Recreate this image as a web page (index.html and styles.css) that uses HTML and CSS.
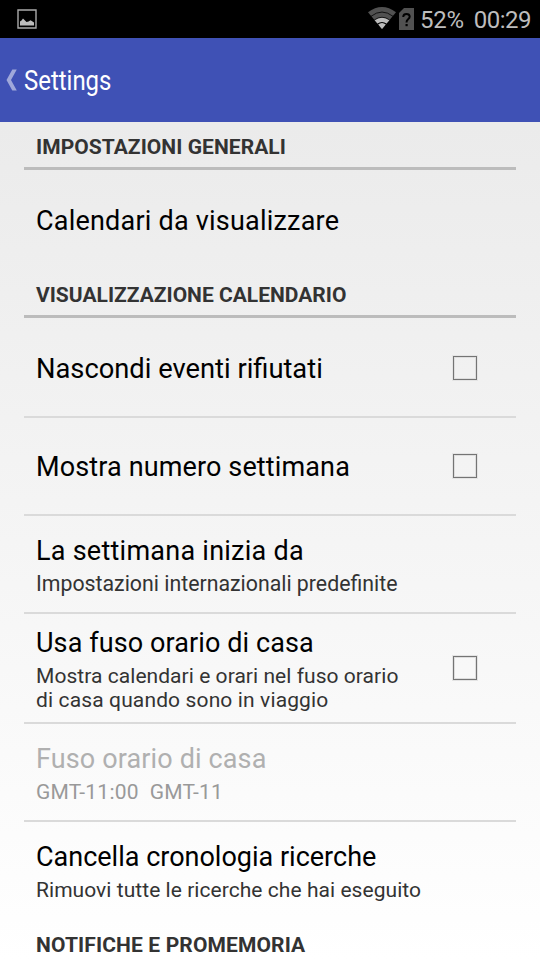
FILE: index.html
```html
<!DOCTYPE html>
<html lang="it">
<head>
<meta charset="utf-8">
<title>Settings</title>
<link rel="stylesheet" href="styles.css">
</head>
<body>
<header class="status">
  <svg class="photo" width="20" height="20" viewBox="0 0 20 20"><path fill="none" stroke="#aaa" stroke-width="1.400" d="M1 1h18v18H1z"/><path fill="#bdbdbd" d="M3 16.500v-4l1.500-1 1.500-2 2 2 1.500 1.500 2-.5 2-1.300 2 1.300 1.500 1v3z"/></svg>
  <div class="indicators">
    <svg class="wifi" width="28" height="22" viewBox="0 0 28 22">
      <path fill="#515151" d="M14 22L0 5.300Q14-5.300 28 5.300z"/>
      <path fill="#bdbdbd" d="M14 22L6.500 13Q14 8 21.500 13z"/>
      <g fill="none" stroke="#000" stroke-width=".8"><path d="M3 9.300Q14 .8 25 9.300"/><path d="M6.300 13Q14 7.500 21.700 13"/><path stroke-width="1.200" d="M9.500 17.200Q14 13.800 18.500 17.200"/></g>
    </svg>
    <div class="sim"><svg width="15" height="22" viewBox="0 0 15 22"><path fill="#515151" d="M5 0h10v22H0V5z"/><path fill="none" stroke="#000" stroke-width="2" d="M4.300 9V8.500Q4.500 6 7.500 6T10.700 8.500Q10.700 10 9 11.300Q7.500 12.300 7.500 14.500"/><path fill="#000" d="M6.500 16h2.200v2.200H6.500z"/></svg></div>
    <span class="battery">52%</span><span class="clock">00:29</span>
  </div>
</header>
<nav class="bar"><svg class="back" width="12" height="22" viewBox="0 0 12 22"><path fill="#9fa8da" d="M6.300 .5h4.500L5 11l5.800 10.500H6.300L.5 11z"/></svg><h1>Settings</h1></nav>
<main>
  <h2 class="s05">IMPOSTAZIONI GENERALI</h2>
  <section class="row plain lead"><p class="title s20">Calendari da visualizzare</p></section>
  <h2>VISUALIZZAZIONE CALENDARIO</h2>
  <section class="row lead single"><p class="title ligature">Nascondi eventi rifiutati</p><i class="check"></i></section>
  <section class="row single"><p class="title s13">Mostra numero settimana</p><i class="check"></i></section>
  <section class="row"><div><p class="title s25">La settimana inizia da</p><p class="sub ligature">Impostazioni internazionali predefinite</p></div></section>
  <section class="row tall"><div><p class="title s10">Usa fuso orario di casa</p><p class="sub"><span class="s05">Mostra calendari e orari nel fuso orario</span><br><span class="s13">di casa quando sono in viaggio</span></p></div><i class="check"></i></section>
  <section class="row disabled"><div><p class="title s13">Fuso orario di casa</p><p class="sub s25">GMT-11:00&nbsp; GMT-11</p></div></section>
  <section class="row plain last"><div><p class="title">Cancella cronologia ricerche</p><p class="sub s05">Rimuovi tutte le ricerche che hai eseguito</p></div></section>
  <h2 class="s13">NOTIFICHE E PROMEMORIA</h2>
</main>
</body>
</html>
```
FILE: styles.css
```css
* { box-sizing: border-box; margin: 0; padding: 0; }
body { width: 540px; height: 960px; overflow: hidden; font-family: Roboto, sans-serif; background: linear-gradient(#e8e8e8, #fff); color: #000; }
.status { height: 38px; background: #000; display: flex; align-items: center; justify-content: space-between; padding: 0 9px 0 17px; color: #bdbdbd; }
.indicators { display: flex; align-items: center; font-size: 24px; line-height: 36px; padding-top: 1px; }
.wifi { margin-top: -3px; }
.sim { display: flex; margin: -1px 6px 0 3px; }
.battery { letter-spacing: -.3px; }
.clock { margin-left: 10px; letter-spacing: -.5px; }
.bar { height: 84px; background: #3f51b5; display: flex; align-items: center; padding-left: 6px; color: #fff; }
.bar h1 { font: 400 28px/36px Roboto, sans-serif; margin-left: 6px; padding-top: 1px; transform: scaleX(.855); transform-origin: left; }
main { padding: 0 24px; }
h2 { height: 48px; padding: 0 12px; border-bottom: 3px solid #bcbcbc; font-size: 21px; font-weight: 700; line-height: 51px; color: #333; }
.row { height: 98px; padding: 0 39px 0 12px; display: flex; align-items: center; justify-content: space-between; border-bottom: 2px solid #dadada; }
.row.lead { height: 100px; padding-top: 2px; }
.row.plain { border-bottom: 0; }
.row.last { padding-bottom: 2px; }
.tall { height: 110px; }
.title { font-size: 27px; line-height: 36px; }
.single .title { padding-top: 2px; }
.title.ligature { font-size: 27.3px; }
.sub { margin-top: 3px; font-size: 21px; line-height: 24px; color: #333; }
.sub.ligature { font-size: 21.3px; }
.s05 { letter-spacing: .05px; }
.s10 { letter-spacing: .1px; }
.s13 { letter-spacing: .13px; }
.s20 { letter-spacing: .21px; }
.s25 { letter-spacing: .25px; }
.check { width: 24px; height: 24px; border: 1px solid #747474; box-shadow: 0 0 0 1px #e4e4e4, inset 0 0 0 1px #dedede; }
.disabled .title { color: #b0b0b0; }
.disabled .sub { color: #999; }
```
